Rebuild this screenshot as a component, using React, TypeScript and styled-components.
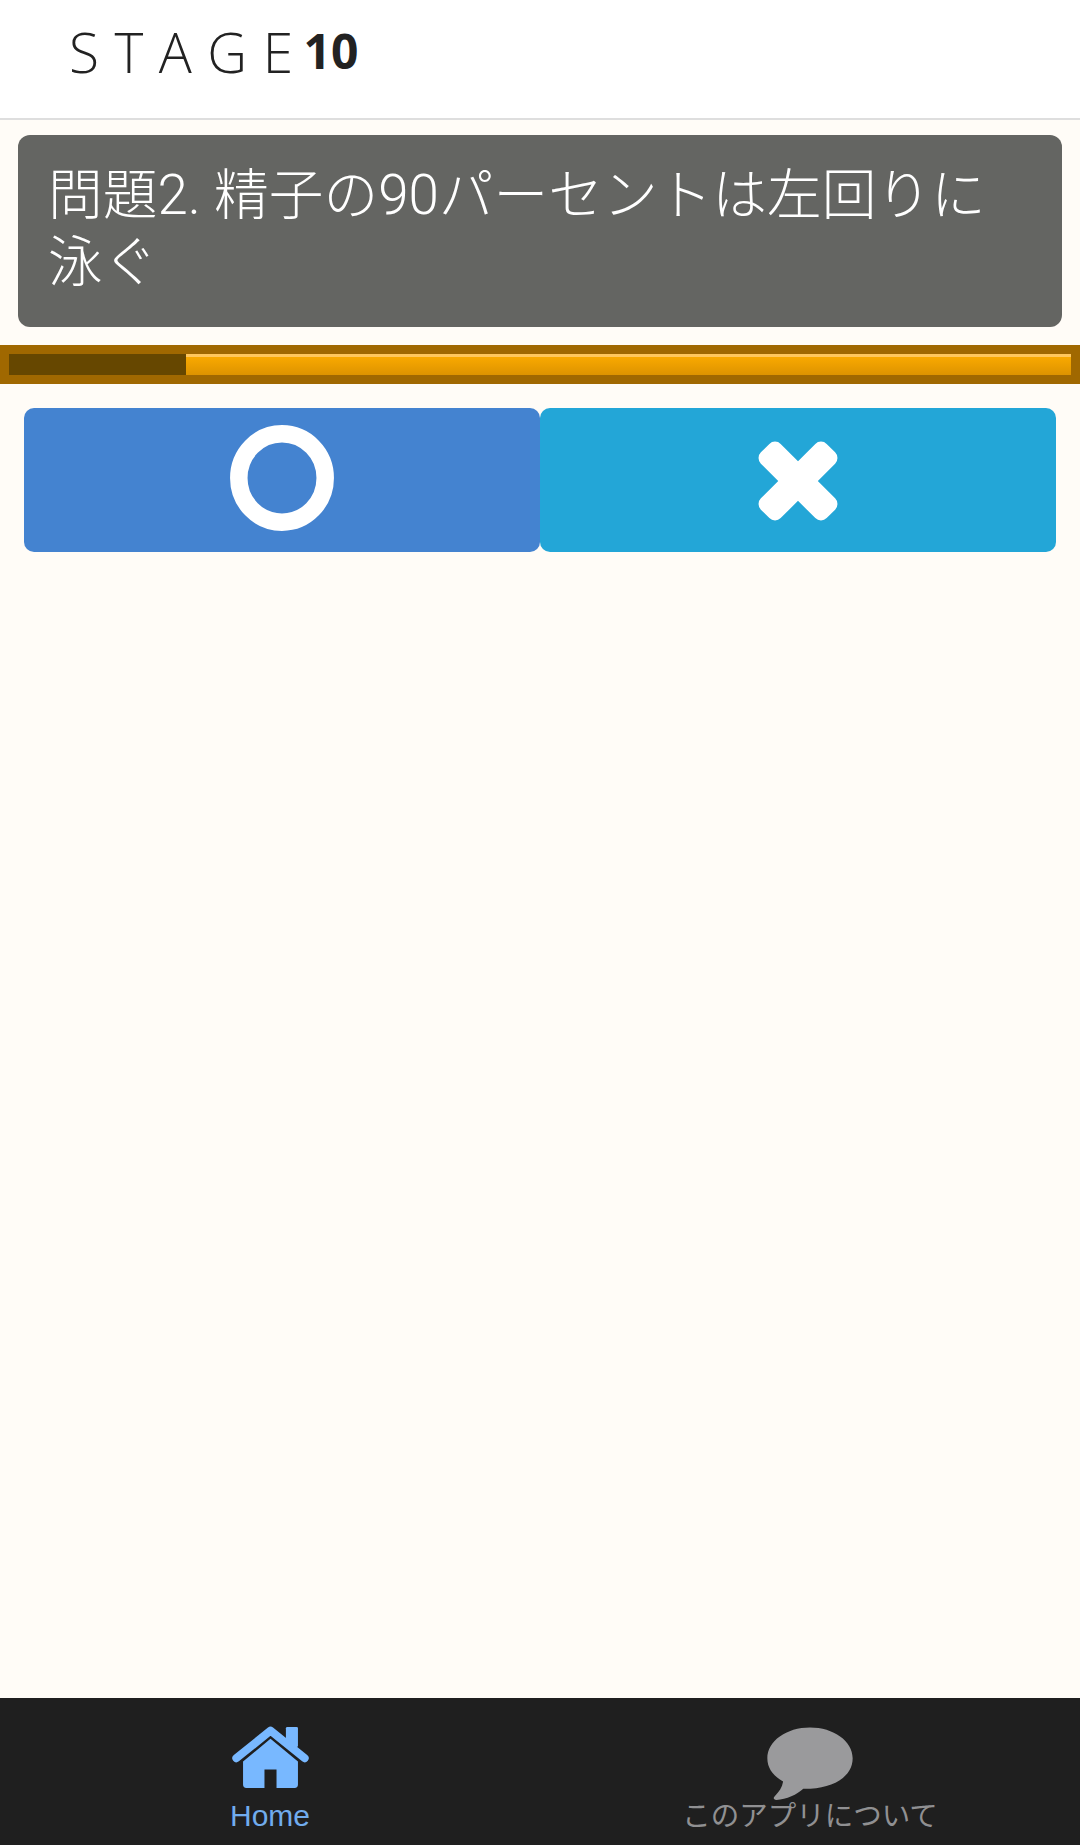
import React from 'react'
import styled, { createGlobalStyle } from 'styled-components'

const GlobalStyle = createGlobalStyle`
  html, body {
    margin: 0;
    padding: 0;
    background: #fffcf7;
  }
`

const Screen = styled.div`
  width: 1080px;
  height: 1845px;
  display: flex;
  flex-direction: column;
  background: #fffcf7;
  font-family: Roboto, "Noto Sans CJK JP", sans-serif;
`

const Header = styled.header`
  height: 102px;
  box-sizing: content-box;
  display: flex;
  align-items: center;
  padding: 0 0 16px 69px;
  background: #fff;
  border-bottom: 2px solid #dedede;
  color: #222;
  font-family: "Open Sans", sans-serif;
`

const StageLabel = styled.span`
  font-size: 55px;
  font-weight: 300;
  letter-spacing: 15.5px;
`

const StageNumber = styled.span`
  font-size: 48px;
  font-weight: 700;
  margin-left: -5px;
  position: relative;
  top: -1px;
`

const Question = styled.div`
  margin: 15px 18px 18px;
  padding: 27px 30px 31px;
  border-radius: 12px;
  background: #646562;
  color: #fff;
  font-size: 54.7px;
  font-weight: 300;
  line-height: 67px;
`

const Gauge = styled.div`
  height: 21px;
  display: flex;
  border: 9px solid #a06800;
`

const GaugeUsed = styled.div`
  width: 177px;
  background: #664700;
`

const GaugeLeft = styled.div`
  flex: 1;
  background: linear-gradient(#f9a900, #dd9300);
  border-top: 3px solid #ffc75c;
`

const Answers = styled.div`
  display: flex;
  margin: 24px 24px 0;
`

const AnswerButton = styled.button<{ $color: string }>`
  flex: 1;
  height: 144px;
  display: flex;
  align-items: center;
  justify-content: center;
  padding: 0;
  border: 0;
  border-radius: 10px;
  background: ${({ $color }) => $color};
`

const TabBar = styled.nav`
  margin-top: auto;
  height: 147px;
  display: grid;
  grid-template-columns: 1fr 1fr;
  background: #1f1f1f;
`

const Tab = styled.div<{ $active?: boolean }>`
  display: flex;
  flex-direction: column;
  align-items: center;
  padding-top: 28px;
  color: ${({ $active }) => ($active ? '#78b8ff' : '#9a9a9c')};
`

const TabLabel = styled.span<{ $size: number; $gap: number }>`
  margin-top: ${({ $gap }) => $gap}px;
  font-family: "Liberation Sans", "Noto Sans CJK JP", sans-serif;
  font-size: ${({ $size }) => $size}px;
  line-height: 36px;
  opacity: 0.92;
`

const CircleIcon = () => (
  <svg width="106" height="112" viewBox="0 0 106 112">
    <ellipse cx="53" cy="54" rx="43.2" ry="44.2" fill="none" stroke="#fff" strokeWidth="17.5" />
  </svg>
)

const CrossIcon = () => (
  <svg width="84" height="86" viewBox="0 0 84 86" fill="#fff">
    <rect x="-4.5" y="30" width="93" height="28" rx="8" transform="rotate(45 42 44)" />
    <rect x="-4.5" y="30" width="93" height="28" rx="8" transform="rotate(-45 42 44)" />
  </svg>
)

const HomeIcon = () => (
  <svg width="77" height="63" viewBox="95 110 230 188" fill="currentColor">
    <rect x="256" y="113" width="36" height="60" rx="4" />
    <path d="M108 206 L210 124 L312 206" fill="none" stroke="currentColor" strokeWidth="24" strokeLinecap="round" strokeLinejoin="round" />
    <path d="M128 216 L210 148 L292 216 V285 Q292 295 282 295 H228 V240 H192 V295 H138 Q128 295 128 285 Z" />
  </svg>
)

const BubbleIcon = () => (
  <svg width="86" height="75" viewBox="322 109 256 223" fill="currentColor">
    <path d="M450 113 C520 113 577 153 577 205 C577 262 515 297 430 296 C412 313 380 328 350 329 C341 329 340 322 345 318 C358 304 367 292 370 274 C340 258 323 234 323 205 C323 153 380 113 450 113 Z" />
  </svg>
)

export default function App() {
  return (
    <Screen>
      <GlobalStyle />
      <Header>
        <StageLabel>STAGE</StageLabel>
        <StageNumber>10</StageNumber>
      </Header>
      <Question>問題2. 精子の90パーセントは左回りに泳ぐ</Question>
      <Gauge>
        <GaugeUsed />
        <GaugeLeft />
      </Gauge>
      <Answers>
        <AnswerButton $color="#4483d0">
          <CircleIcon />
        </AnswerButton>
        <AnswerButton $color="#23a6d7">
          <CrossIcon />
        </AnswerButton>
      </Answers>
      <TabBar>
        <Tab $active>
          <HomeIcon />
          <TabLabel $size={30} $gap={9}>Home</TabLabel>
        </Tab>
        <Tab>
          <BubbleIcon />
          <TabLabel $size={28.5} $gap={-3}>このアプリについて</TabLabel>
        </Tab>
      </TabBar>
    </Screen>
  )
}
